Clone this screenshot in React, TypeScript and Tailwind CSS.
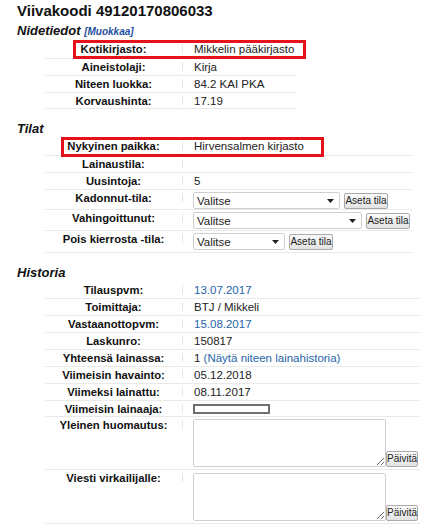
import React from "react";

type Row = {
  label: string;
  h: string;
  value?: React.ReactNode;
};

const InfoTable = ({ rows }: { rows: Row[] }) => (
  <div className="ml-[28px] mt-[1px] flex w-max flex-col">
    {rows.map((r) => (
      <div key={r.label} className={`${r.h} flex border-b border-[#e9e9e9]`}>
        <div className="w-[137px] shrink-0 text-center text-[11.3px] font-bold leading-[16px] text-[#111]">
          {r.label}
        </div>
        <div className="mt-[3px] h-[9px] w-px shrink-0 rounded-full bg-[#e4e4e4]" />
        <div className="pl-[11px] pr-[2px] text-[11.5px] leading-[16px] text-[#222]">{r.value}</div>
      </div>
    ))}
  </div>
);

const Link = ({ children }: { children: React.ReactNode }) => (
  <span className="text-[#2563a8]">{children}</span>
);

const FakeSelect = ({ w }: { w: string }) => (
  <div
    className={`${w} flex h-[17px] items-center justify-between rounded-[2px] border border-[#cfcfcf] bg-white pl-[3px] pr-[5px] text-[11.5px] text-[#222]`}
  >
    <span>Valitse</span>
    <svg width="7" height="4" viewBox="0 0 7 4">
      <polygon points="0,0 7,0 3.5,4" fill="#222" />
    </svg>
  </div>
);

const SmallButton = ({ children, w }: { children: React.ReactNode; w: string }) => (
  <button
    className={`${w} flex h-[16px] shrink-0 items-center justify-center whitespace-nowrap rounded-[2px] border border-[#a9a9a9] bg-gradient-to-b from-[#fafafa] to-[#e3e3e3] p-0 text-[10px] leading-none text-[#222]`}
  >
    {children}
  </button>
);

const StatusControl = ({ w }: { w: string }) => (
  <div className="-ml-[1px] mt-[2px] flex items-center gap-[4px]">
    <FakeSelect w={w} />
    <SmallButton w="w-[44px]">Aseta tila</SmallButton>
  </div>
);

const NoteField = ({ mt }: { mt: string }) => (
  <div className={`-ml-[1px] ${mt} flex items-end`}>
    <textarea className="block h-[48px] w-[193px] rounded-[2px] border border-[#d0d0d0] bg-white" />
    <SmallButton w="w-[32px]">Päivitä</SmallButton>
  </div>
);

export default function App() {
  const nidetiedot: Row[] = [
    { label: "Kotikirjasto:", h: "h-[18px]", value: "Mikkelin pääkirjasto" },
    { label: "Aineistolaji:", h: "h-[17px]", value: "Kirja" },
    { label: "Niteen luokka:", h: "h-[17px]", value: "84.2 KAI PKA" },
    { label: "Korvaushinta:", h: "h-[16px]", value: "17.19" },
  ];

  const tilat: Row[] = [
    { label: "Nykyinen paikka:", h: "h-[18px]", value: "Hirvensalmen kirjasto" },
    { label: "Lainaustila:", h: "h-[17px]" },
    { label: "Uusintoja:", h: "h-[17px]", value: "5" },
    { label: "Kadonnut-tila:", h: "h-[20px]", value: <StatusControl w="w-[147px]" /> },
    { label: "Vahingoittunut:", h: "h-[21px]", value: <StatusControl w="w-[169px]" /> },
    { label: "Pois kierrosta -tila:", h: "h-[22px]", value: <StatusControl w="w-[92px]" /> },
  ];

  const historia: Row[] = [
    { label: "Tilauspvm:", h: "h-[17px]", value: <Link>13.07.2017</Link> },
    { label: "Toimittaja:", h: "h-[17px]", value: "BTJ / Mikkeli" },
    { label: "Vastaanottopvm:", h: "h-[17px]", value: <Link>15.08.2017</Link> },
    { label: "Laskunro:", h: "h-[17px]", value: "150817" },
    {
      label: "Yhteensä lainassa:",
      h: "h-[17px]",
      value: (
        <>
          1 <Link>(Näytä niteen lainahistoria)</Link>
        </>
      ),
    },
    { label: "Viimeisin havainto:", h: "h-[17px]", value: "05.12.2018" },
    { label: "Viimeksi lainattu:", h: "h-[17px]", value: "08.11.2017" },
    {
      label: "Viimeisin lainaaja:",
      h: "h-[16px]",
      value: <div className="-ml-[1px] mt-[3px] h-[10px] w-[77px] border-2 border-[#6f6f6f]" />,
    },
    { label: "Yleinen huomautus:", h: "h-[53px]", value: <NoteField mt="mt-[2px]" /> },
    { label: "Viesti virkailijalle:", h: "h-[54px]", value: <NoteField mt="mt-[3px]" /> },
  ];

  return (
    <div className="relative min-h-[530px] bg-white pl-[17px] pt-[2px] font-['Liberation_Sans',Arial,sans-serif] text-[#222]">
      <h1 className="text-[15px] font-bold leading-[18px] text-[#111]">Viivakoodi 49120170806033</h1>

      <h2 className="mt-[3px] text-[13px] font-bold italic leading-[16px] text-[#111]">
        Nidetiedot <span className="text-[10px] text-[#1f4f9e]">[Muokkaa]</span>
      </h2>
      <InfoTable rows={nidetiedot} />

      <h2 className="mt-[12px] text-[13px] font-bold italic leading-[16px] text-[#111]">Tilat</h2>
      <InfoTable rows={tilat} />

      <h2 className="mt-[12px] text-[13px] font-bold italic leading-[16px] text-[#111]">Historia</h2>
      <InfoTable rows={historia} />

      {/* red highlight boxes drawn over the screenshot */}
      <div className="pointer-events-none absolute left-[73px] top-[40px] h-[19px] w-[233px] border-[3px] border-[#e5121b]" />
      <div className="pointer-events-none absolute left-[61px] top-[137px] h-[20px] w-[263px] border-[3px] border-[#e5121b]" />
    </div>
  );
}
